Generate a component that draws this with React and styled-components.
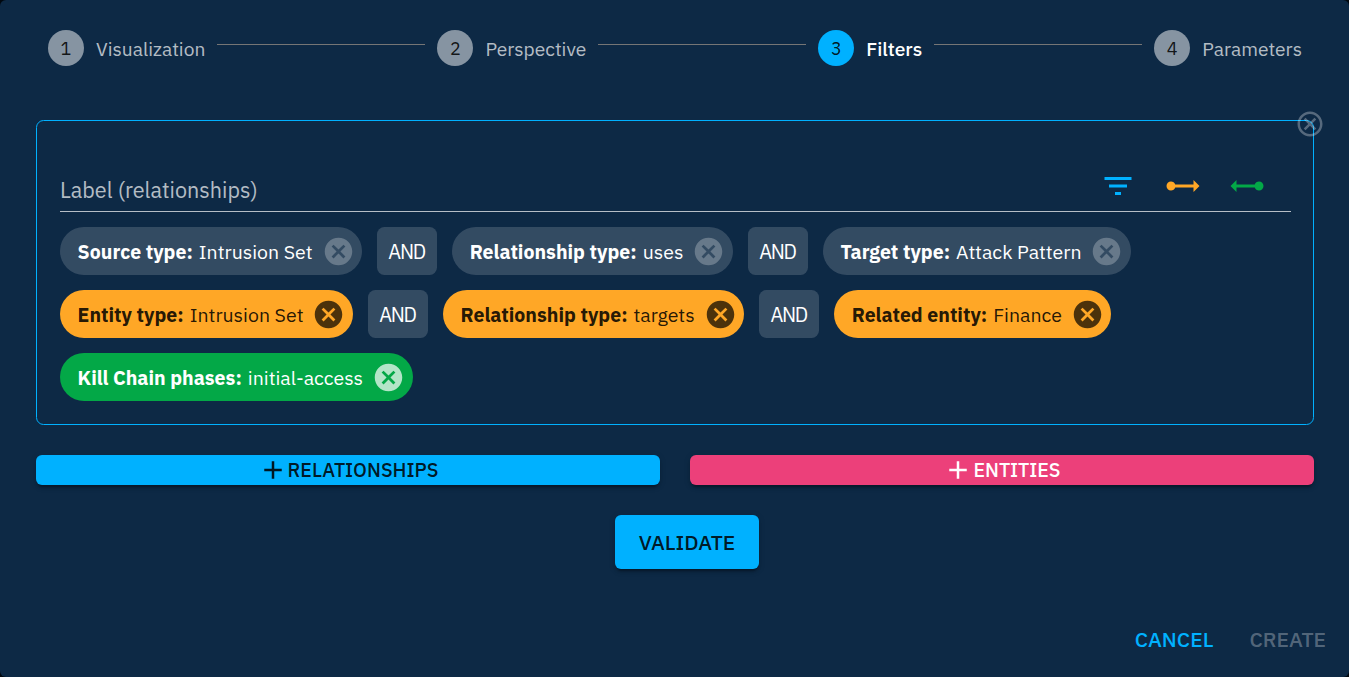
import React from 'react';
import styled, { createGlobalStyle, css } from 'styled-components';

const GlobalStyle = createGlobalStyle`
  * { box-sizing: border-box; }
  body {
    margin: 0;
    background: #01080f;
    font-family: "IBM Plex Sans", Roboto, "Noto Sans", sans-serif;
    color: #fff;
  }
  button { font-family: inherit; border: 0; margin: 0; cursor: pointer; }
`;

const Dialog = styled.main`
  display: flex;
  flex-direction: column;
  width: 1349px;
  height: 677px;
  padding: 30px 11px 17px 36px;
  border-radius: 6px;
  background: #0d2945;
  overflow: hidden;
`;

const Stepper = styled.ol`
  display: flex;
  align-items: center;
  gap: 12px;
  height: 36px;
  margin: 0;
  padding: 0 36px 0 12px;
  list-style: none;
`;

const Step = styled.li`
  display: flex;
  align-items: center;
  gap: 12px;
  font-size: 19.2px;
  line-height: 28px;
  white-space: nowrap;
  color: ${(p) => (p.$active ? '#fff' : 'rgba(255, 255, 255, 0.7)')};
  font-weight: ${(p) => (p.$active ? 500 : 400)};
`;

const StepNumber = styled.span`
  width: 36px;
  height: 36px;
  border-radius: 50%;
  background: ${(p) => (p.$active ? '#00b1ff' : 'rgba(255, 255, 255, 0.5)')};
  color: rgba(0, 0, 0, 0.87);
  font-size: 18px;
  font-weight: 400;
  line-height: 37px;
  text-align: center;
`;

const StepLabel = styled.span`
  padding-top: 2px;
`;

const Connector = styled.li`
  flex: 1;
  height: 1px;
  margin-bottom: 7px;
  background: #757575;
`;

const FilterBox = styled.section`
  position: relative;
  width: 1278px;
  height: 305px;
  margin-top: 54px;
  padding: 46px 22px 0 23px;
  border: 1px solid #00b1ff;
  border-radius: 7.5px;
`;

const RemoveButton = styled.button`
  position: absolute;
  top: -12px;
  right: -12px;
  width: 30px;
  height: 30px;
  padding: 0;
  background: none;
  color: rgba(255, 255, 255, 0.3);
`;

const Icon = styled.svg`
  display: block;
  flex: none;
  width: ${(p) => p.$size}px;
  height: ${(p) => p.$size}px;
  fill: ${(p) => p.$color || 'currentColor'};
`;

const Field = styled.div`
  display: flex;
  justify-content: space-between;
  width: 1231px;
  height: 45px;
  padding-right: 26px;
  border-bottom: 1px solid rgba(255, 255, 255, 0.7);
`;

const FieldLabel = styled.label`
  padding-top: 7px;
  font-size: 21.6px;
  line-height: 32px;
  color: rgba(255, 255, 255, 0.7);
`;

const FieldActions = styled.div`
  display: flex;
  gap: 28.5px;
  padding-top: 1px;
`;

const FilterRow = styled.div`
  display: flex;
  gap: 15px;
  height: 48px;
  margin-top: 15px;
`;

const chipTone = {
  default: css`
    background: rgba(255, 255, 255, 0.16);
    color: #fff;
    --delete: rgba(255, 255, 255, 0.26);
  `,
  warning: css`
    background: #ffa726;
    color: rgba(0, 0, 0, 0.87);
    --delete: rgba(0, 0, 0, 0.7);
  `,
  success: css`
    background: #03a847;
    color: #fff;
    --delete: rgba(255, 255, 255, 0.7);
  `,
};

const ChipBody = styled.div`
  display: flex;
  align-items: center;
  gap: 9px;
  padding: 0 7.5px 0 17.6px;
  border-radius: 24px;
  font-size: 19.5px;
  line-height: 29px;
  white-space: nowrap;
  ${(p) => chipTone[p.$tone]}
`;

const ChipName = styled.strong`
  margin-right: 1.35px;
`;

const Operator = styled.div`
  width: 60px;
  padding-right: 1px;
  border-radius: 7.5px;
  background: rgba(255, 255, 255, 0.16);
  font-size: 20px;
  letter-spacing: -1.3px;
  line-height: 50px;
  text-align: center;
`;

const AddRow = styled.div`
  display: grid;
  grid-template-columns: 1fr 1fr;
  gap: 30px;
  width: 1278px;
  margin-top: 30px;
`;

const raised = css`
  border-radius: 6px;
  box-shadow: 0 4.5px 1.5px -3px rgba(0, 0, 0, 0.2), 0 3px 3px rgba(0, 0, 0, 0.14),
    0 1.5px 7.5px rgba(0, 0, 0, 0.12);
`;

const AddButton = styled.button`
  ${raised}
  display: flex;
  align-items: center;
  justify-content: center;
  height: 30px;
  padding: 0;
  font-size: 19.5px;
  font-weight: 500;
  line-height: 30px;
  background: ${(p) => (p.$secondary ? '#ec407a' : '#00b1ff')};
  color: ${(p) => (p.$secondary ? '#fff' : 'rgba(0, 0, 0, 0.87)')};
`;

const ValidateButton = styled.button`
  ${raised}
  align-self: center;
  width: 144px;
  height: 54px;
  margin-top: 30px;
  padding: 0;
  background: #00b1ff;
  color: rgba(0, 0, 0, 0.87);
  font-size: 21px;
  font-weight: 500;
  line-height: 55px;
`;

const DialogActions = styled.footer`
  display: flex;
  justify-content: flex-end;
  gap: 12px;
  margin-top: auto;
`;

const TextButton = styled.button`
  height: 42px;
  padding: 0 12px;
  background: none;
  color: ${(p) => (p.$disabled ? 'rgba(255, 255, 255, 0.3)' : '#00b1ff')};
  font-size: 21px;
  font-weight: 500;
  line-height: 42px;
`;

const paths = {
  cancelOutlined:
    'M12 2C6.47 2 2 6.47 2 12s4.47 10 10 10 10-4.47 10-10S17.53 2 12 2zm0 18c-4.41 0-8-3.59-8-8s3.59-8 8-8 8 3.59 8 8-3.59 8-8 8zm3.59-13L12 10.59 8.41 7 7 8.41 10.59 12 7 15.59 8.41 17 12 13.41 15.59 17 17 15.59 13.41 12 17 8.41z',
  cancel:
    'M12 2C6.47 2 2 6.47 2 12s4.47 10 10 10 10-4.47 10-10S17.53 2 12 2zm5 13.59L15.59 17 12 13.41 8.41 17 7 15.59 10.59 12 7 8.41 8.41 7 12 10.59 15.59 7 17 8.41 13.41 12 17 15.59z',
  filterList: 'M10 18h4v-2h-4v2zM3 6v2h18V6H3zm3 7h12v-2H6v2z',
  rayStart:
    'M23 12L19 16V13H6.83C6.42 14.17 5.31 15 4 15C2.34 15 1 13.66 1 12S2.34 9 4 9C5.31 9 6.42 9.83 6.83 11H19V8L23 12Z',
  rayEnd:
    'M1 12L5 16V13H17.17C17.58 14.17 18.69 15 20 15C21.66 15 23 13.66 23 12S21.66 9 20 9C18.69 9 17.58 9.83 17.17 11H5V8L1 12Z',
  add: 'M19 13h-6v6h-2v-6H5v-2h6V5h2v6h6v2z',
};

function Glyph({ name, size, color }) {
  return (
    <Icon viewBox="0 0 24 24" $size={size} $color={color} aria-hidden="true">
      <path d={paths[name]} />
    </Icon>
  );
}

function Chip({ tone, name, value }) {
  return (
    <ChipBody $tone={tone}>
      <span>
        <ChipName>{name}:</ChipName> {value}
      </span>
      <Glyph name="cancel" size={33} color="var(--delete)" />
    </ChipBody>
  );
}

const steps = ['Visualization', 'Perspective', 'Filters', 'Parameters'];
const activeStep = 2;

const filterRows = [
  {
    tone: 'default',
    filters: [
      ['Source type', 'Intrusion Set'],
      ['Relationship type', 'uses'],
      ['Target type', 'Attack Pattern'],
    ],
  },
  {
    tone: 'warning',
    filters: [
      ['Entity type', 'Intrusion Set'],
      ['Relationship type', 'targets'],
      ['Related entity', 'Finance'],
    ],
  },
  { tone: 'success', filters: [['Kill Chain phases', 'initial-access']] },
];

export default function App() {
  return (
    <>
      <GlobalStyle />
      <Dialog>
        <Stepper>
          {steps.map((label, i) => (
            <React.Fragment key={label}>
              {i > 0 && <Connector />}
              <Step $active={i === activeStep}>
                <StepNumber $active={i === activeStep}>{i + 1}</StepNumber>
                <StepLabel>{label}</StepLabel>
              </Step>
            </React.Fragment>
          ))}
        </Stepper>

        <FilterBox>
          <RemoveButton aria-label="Delete">
            <Glyph name="cancelOutlined" size={30} />
          </RemoveButton>
          <Field>
            <FieldLabel>Label (relationships)</FieldLabel>
            <FieldActions>
              <Glyph name="filterList" size={36} color="#00b1ff" />
              <Glyph name="rayStart" size={36} color="#ffa726" />
              <Glyph name="rayEnd" size={36} color="#03a847" />
            </FieldActions>
          </Field>
          {filterRows.map(({ tone, filters }) => (
            <FilterRow key={tone}>
              {filters.map(([name, value], i) => (
                <React.Fragment key={name}>
                  {i > 0 && <Operator>AND</Operator>}
                  <Chip tone={tone} name={name} value={value} />
                </React.Fragment>
              ))}
            </FilterRow>
          ))}
        </FilterBox>

        <AddRow>
          <AddButton>
            <Glyph name="add" size={30} />
            RELATIONSHIPS
          </AddButton>
          <AddButton $secondary>
            <Glyph name="add" size={30} />
            ENTITIES
          </AddButton>
        </AddRow>
        <ValidateButton>VALIDATE</ValidateButton>

        <DialogActions>
          <TextButton>CANCEL</TextButton>
          <TextButton $disabled>CREATE</TextButton>
        </DialogActions>
      </Dialog>
    </>
  );
}
